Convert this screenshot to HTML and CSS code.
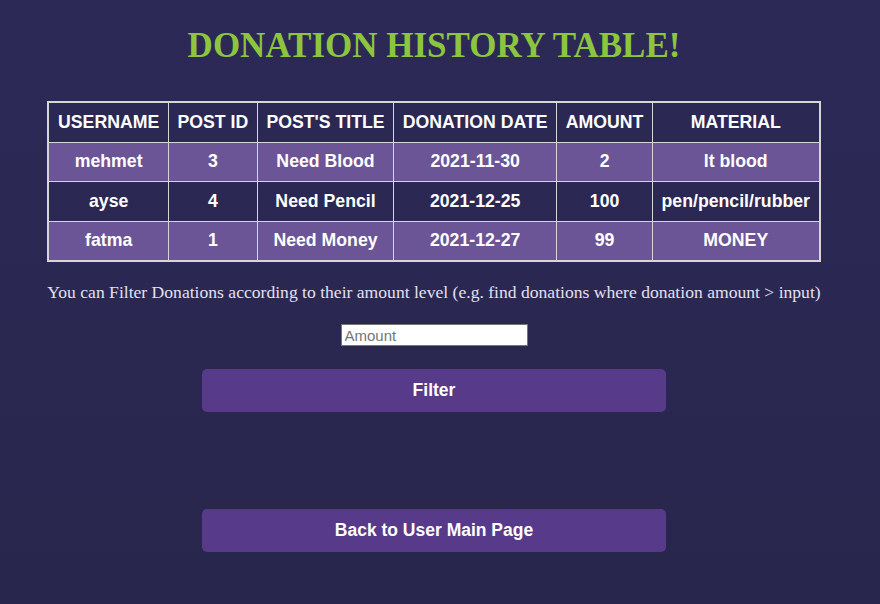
FILE: index.html
```html
<!DOCTYPE html>
<html>
<head>
<meta charset="utf-8">
<link rel="stylesheet" href="styles.css">
</head>
<body>
<div class="page">
  <h1 class="title">DONATION HISTORY TABLE!</h1>
  <table class="history">
    <thead>
      <tr><th>USERNAME</th><th>POST ID</th><th>POST'S TITLE</th><th>DONATION DATE</th><th>AMOUNT</th><th>MATERIAL</th></tr>
    </thead>
    <tbody>
      <tr class="odd"><td>mehmet</td><td>3</td><td>Need Blood</td><td>2021-11-30</td><td>2</td><td>lt blood</td></tr>
      <tr><td>ayse</td><td>4</td><td>Need Pencil</td><td>2021-12-25</td><td>100</td><td>pen/pencil/rubber</td></tr>
      <tr class="odd"><td>fatma</td><td>1</td><td>Need Money</td><td>2021-12-27</td><td>99</td><td>MONEY</td></tr>
    </tbody>
  </table>
  <p class="hint">You can Filter Donations according to their amount level (e.g. find donations where donation amount &gt; input)</p>
  <input class="amount" type="text" placeholder="Amount">
  <button class="btn filter">Filter</button>
  <button class="btn back">Back to User Main Page</button>
</div>
</body>
</html>
```

FILE: styles.css
```css
html, body {
  margin: 0;
  height: 100%;
}
body {
  background: linear-gradient(180deg, #2c2957 0%, #28264c 100%);
  font-family: "Liberation Sans", Arial, sans-serif;
  color: #fff;
}
.page {
  width: 852px;
  margin-left: 8px;
  display: flex;
  flex-direction: column;
  align-items: center;
}
.title {
  font-family: "Liberation Serif", "Times New Roman", serif;
  font-size: 35px;
  font-weight: bold;
  color: #8cc63e;
  margin: 25px 0 35px;
  line-height: 41px;
}
.history {
  border-collapse: collapse;
  border: 2px solid #d6d6d6;
}
.history th, .history td {
  border: 1px solid #d6d6d6;
  padding: 0 8.6px;
  height: 38.5px;
  text-align: center;
  font-weight: bold;
  font-size: 17.7px;
  white-space: nowrap;
}
.history th {
  background: #2b2853;
}
.history tr.odd td {
  background: #6b5596;
}
.hint {
  font-family: "Liberation Serif", "Times New Roman", serif;
  font-size: 17.6px;
  color: #e4e0ee;
  margin: 19px 0 0;
  line-height: 22px;
}
.amount {
  margin-top: 21px;
  width: 187px;
  height: 22px;
  box-sizing: border-box;
  border: 1px solid #767676;
  padding: 1px 3px;
  font-family: "Liberation Sans", Arial, sans-serif;
  font-size: 15px;
  background: #fff;
}
.amount::placeholder {
  color: #757575;
}
.btn {
  width: 464px;
  height: 43px;
  border: none;
  border-radius: 5px;
  background: #583a8a;
  color: #fff;
  font-family: "Liberation Sans", Arial, sans-serif;
  font-weight: bold;
  font-size: 17.5px;
}
.filter {
  margin-top: 23px;
}
.back {
  margin-top: 97px;
}
```
